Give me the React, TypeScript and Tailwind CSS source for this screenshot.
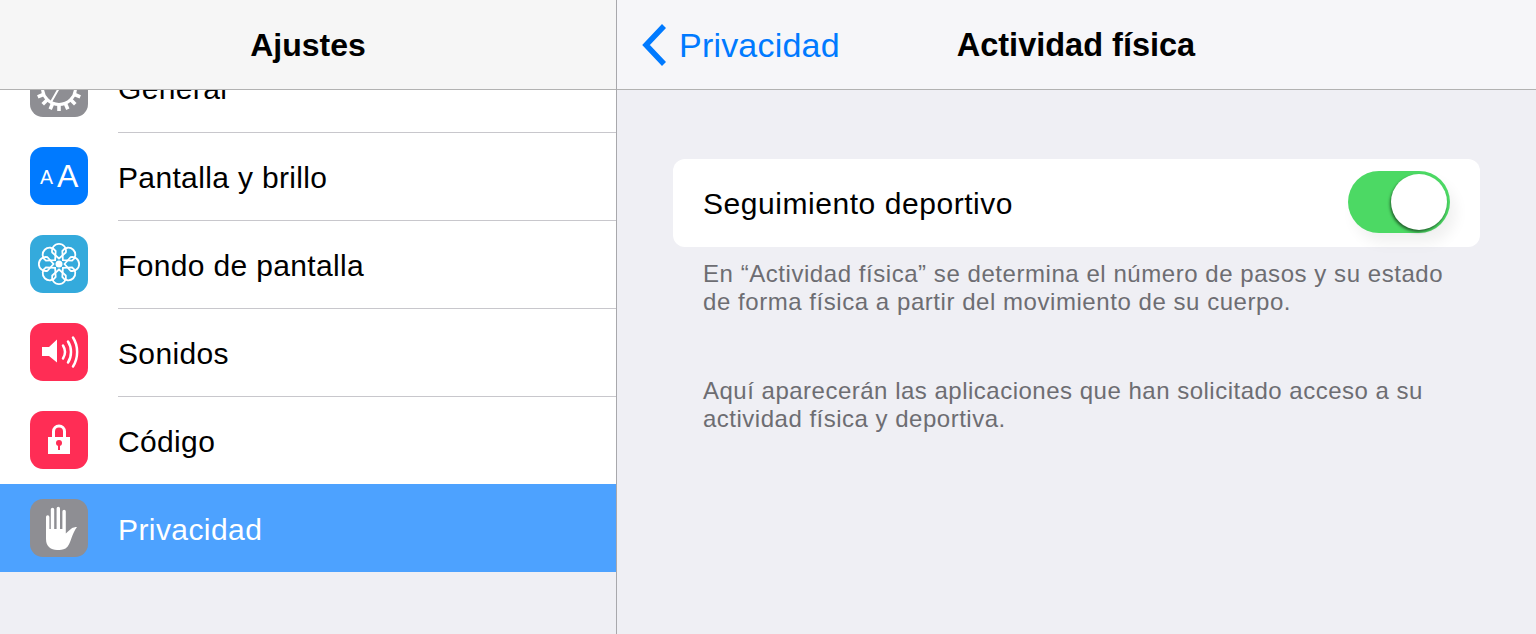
const font = { fontFamily: '"Liberation Sans", Arial, sans-serif' }

function IconBox({ bg, children }: { bg: string; children: React.ReactNode }) {
  return <div className={`w-[58px] h-[58px] rounded-[13px] flex items-center justify-center shrink-0 overflow-hidden ${bg}`}>{children}</div>
}

function GearIcon() {
  const teeth = Array.from({ length: 16 }, (_, i) => i * 22.5)
  return (
    <svg width="58" height="58" viewBox="0 0 58 58" fill="none" stroke="#fff">
      <circle cx="29" cy="29" r="16.500" strokeWidth="3" />
      {teeth.map((a) => (
        <line key={a} x1="29" y1="6" x2="29" y2="12" strokeWidth="3.600" transform={`rotate(${a} 29 29)`} />
      ))}
      <path d="M29 29l-8 14M29 29l-14-6M29 29l12-12" strokeWidth="2" />
    </svg>
  )
}

function AaIcon() {
  return (
    <svg width="58" height="58" viewBox="0 0 58 58" fill="#fff" style={font}>
      <text x="10" y="37" fontSize="19.500">A</text>
      <text x="27" y="40" fontSize="32">A</text>
    </svg>
  )
}

function FlowerIcon() {
  const petals = [0, 45, 90, 135, 180, 225, 270, 315]
  return (
    <svg width="58" height="58" viewBox="0 0 58 58" fill="none" stroke="#fff" strokeWidth="1.800">
      {petals.map((a) => (
        <path key={a} d="M29 23.500L22.200 17.500A7 7 0 1 1 35.800 17.500Z" transform={`rotate(${a} 29 29)`} />
      ))}
      <circle cx="29" cy="29" r="3.500" fill="#fff" stroke="none" />
    </svg>
  )
}

function SoundIcon() {
  return (
    <svg width="58" height="58" viewBox="0 0 58 58" fill="none" stroke="#fff" strokeWidth="2.500" strokeLinecap="round">
      <path d="M12 24h7l8-7.500v23L19 33h-7z" fill="#fff" stroke="none" />
      <path d="M33 22.500c2.500 4 2.500 9 0 13" />
      <path d="M38 18.500c4 6 4 15 0 21" />
      <path d="M43 14.500c5.500 8.500 5.500 20.500 0 29" />
    </svg>
  )
}

function LockIcon() {
  return (
    <svg width="58" height="58" viewBox="0 0 58 58">
      <path d="M18 26h22v17H18z" fill="#fff" />
      <path d="M23.500 26v-5.500a5.500 5.500 0 0 1 11 0V26" fill="none" stroke="#fff" strokeWidth="3" />
      <circle cx="29" cy="32" r="3" fill="#ff2d55" />
      <rect x="28" y="32" width="2" height="7" fill="#ff2d55" />
    </svg>
  )
}

function HandIcon() {
  return (
    <svg width="58" height="58" viewBox="0 0 58 58">
      <path
        fill="#fff"
        d="M16 18a1.700 1.700 0 0 1 3.400 0V30h1.400V10.500a1.700 1.700 0 0 1 3.400 0V30h2.400V9.500a1.700 1.700 0 0 1 3.400 0V30h2.400V12.500a1.700 1.700 0 0 1 3.400 0V34.500C37.500 33 39.500 31 41.500 29.500 43 28.500 45 28 47 28 44.500 31 43 35 41.500 39 40 43.500 38.500 47.500 35.500 49.500 33 51 30 51 27 51 21 51 16 47.500 16 40z"
      />
    </svg>
  )
}

function Row({ label, icon, separator = true }: { label: string; icon: React.ReactNode; separator?: boolean }) {
  return (
    <div className="h-[88px] flex items-center pl-[30px] bg-white">
      {icon}
      <div className={`self-stretch flex-1 ml-[30px] flex items-center pt-[1px] text-[30px] text-black ${separator ? 'border-t border-[#c8c7cc]' : ''}`}>
        <span className="tracking-[0.35px]">{label}</span>
      </div>
    </div>
  )
}

export default function App() {
  return (
    <div style={font} className="w-[1536px] h-[634px] flex overflow-hidden bg-[#efeff4]">
      <aside className="w-[617px] h-full flex flex-col border-r border-[#a8a8ac]">
        <header className="h-[90px] shrink-0 bg-[#f6f6f6] border-b border-[#b2b2b2] flex items-center justify-center text-[32px] font-bold text-black">
          Ajustes
        </header>
        <div className="h-[42px] overflow-hidden bg-white">
          <div className="-mt-[46px]">
            <Row label="General" separator={false} icon={<IconBox bg="bg-[#8e8e93]"><GearIcon /></IconBox>} />
          </div>
        </div>
        <Row label="Pantalla y brillo" icon={<IconBox bg="bg-[#007aff]"><AaIcon /></IconBox>} />
        <Row label="Fondo de pantalla" icon={<IconBox bg="bg-[#34aadc]"><FlowerIcon /></IconBox>} />
        <Row label="Sonidos" icon={<IconBox bg="bg-[#ff2d55]"><SoundIcon /></IconBox>} />
        <Row label="Código" icon={<IconBox bg="bg-[#ff2d55]"><LockIcon /></IconBox>} />
        <div className="h-[88px] flex items-center pl-[30px] bg-[#4da2ff]">
          <IconBox bg="bg-[#8e8e93]"><HandIcon /></IconBox>
          <span className="ml-[30px] pt-[2px] text-[30px] tracking-[0.42px] text-white">Privacidad</span>
        </div>
      </aside>

      <main className="flex-1 flex flex-col">
        <header className="h-[90px] shrink-0 bg-[#f6f6f9] border-b border-[#b2b2b2] flex items-center">
          <svg className="ml-[23px]" width="28" height="44" viewBox="0 0 28 44" fill="none" stroke="#007aff" strokeWidth="5.500">
            <path d="M24 3L6 22l18 19" />
          </svg>
          <span className="ml-[11px] pt-[1px] text-[34px] text-[#007aff] tracking-[0.2px]">Privacidad</span>
          <span className="ml-[117px] pt-[1px] text-[32.5px] font-bold text-black">Actividad física</span>
        </header>
        <section className="pt-[69px] px-[56px]">
          <div className="h-[88px] bg-white rounded-[12px] flex items-center justify-between px-[30px]">
            <span className="text-[30px] tracking-[0.55px] text-black">Seguimiento deportivo</span>
            <div className="mb-[2px] w-[102px] h-[62px] rounded-full bg-[#4cd964] flex items-center justify-end pr-[3px] shadow-[6px_10px_14px_rgba(0,0,0,0.06)]">
              <div className="w-[56px] h-[56px] rounded-full bg-white shadow-[-1px_2px_3px_rgba(0,0,0,0.55)]" />
            </div>
          </div>
          <p className="mt-[13px] px-[30px] text-[24px] leading-[28px] tracking-[0.55px] text-[#6d6d72]">
            En “Actividad física” se determina el número de pasos y su estado<br />de forma física a partir del movimiento de su cuerpo.
          </p>
          <p className="mt-[61px] px-[30px] text-[24px] leading-[28px] tracking-[0.5px] text-[#6d6d72]">
            Aquí aparecerán las aplicaciones que han solicitado acceso a su<br />actividad física y deportiva.
          </p>
        </section>
      </main>
    </div>
  )
}
